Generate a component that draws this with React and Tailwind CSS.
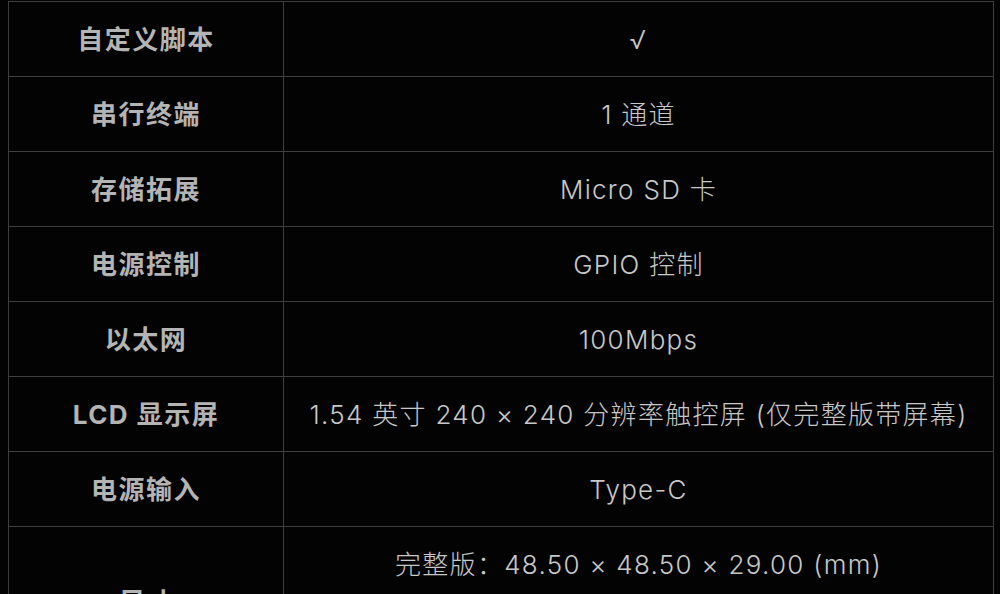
import React from "react";

const rows = [
  ["自定义脚本", "√"],
  ["串行终端", "1 通道"],
  ["存储拓展", "Micro SD 卡"],
  ["电源控制", "GPIO 控制"],
  ["以太网", "100Mbps"],
  ["LCD 显示屏", "1.54 英寸 240 × 240 分辨率触控屏 (仅完整版带屏幕)"],
  ["电源输入", "Type-C"],
];

const font = { fontFamily: 'Inter, "Noto Sans CJK SC", "Noto Sans", sans-serif' };

const labelCls =
  "border border-[#3e3e3e] pt-[2px] text-center align-middle text-[26px] font-bold tracking-[1.5px] text-[#b4b4b4] leading-none";
const valueCls =
  "pt-[2px] text-center align-middle text-[26px] font-light tracking-[1.3px] text-[#c8c8c8] leading-none";

export default function App() {
  return (
    <div className="h-[594px] w-[1000px] overflow-hidden bg-[#030303] pl-[8px] pt-[1px]" style={font}>
      <table className="w-[985px] border-collapse table-fixed">
        <colgroup>
          <col className="w-[275px]" />
          <col className="w-[710px]" />
        </colgroup>
        <tbody>
          {rows.map(([k, v]) => (
            <tr key={k} className="h-[75px]">
              <td className={labelCls}>{k}</td>
              <td className={"border border-[#3e3e3e] " + valueCls}>{v}</td>
            </tr>
          ))}
          <tr className="h-[75px]">
            <td rowSpan={2} className={labelCls}>
              尺寸
            </td>
            <td className={"border-x border-t border-[#3e3e3e] " + valueCls}>
              完整版：48.50 × 48.50 × 29.00 (mm)
            </td>
          </tr>
          <tr className="h-[75px]">
            <td className={"border-x border-b border-[#3e3e3e] " + valueCls}>
              基础版：48.50 × 48.50 × 19.00 (mm)
            </td>
          </tr>
        </tbody>
      </table>
    </div>
  );
}
